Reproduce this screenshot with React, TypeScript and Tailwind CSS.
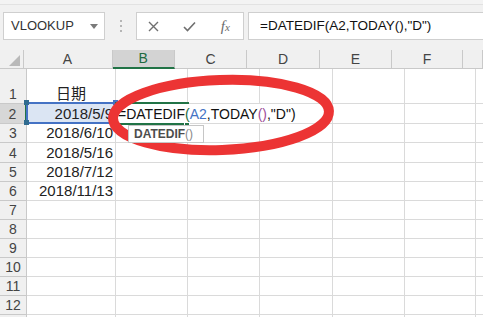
import React from "react";

type Col = { key: string; w: string; label: string };
const cols: Col[] = [
  { key: "A", w: "w-[89px]", label: "A" },
  { key: "B", w: "w-[72px]", label: "B" },
  { key: "C", w: "w-[72px]", label: "C" },
  { key: "D", w: "w-[73px]", label: "D" },
  { key: "E", w: "w-[72px]", label: "E" },
  { key: "F", w: "w-[71px]", label: "F" },
  { key: "G", w: "w-[20px]", label: "" },
];

type Row = { n: number; h: string; a?: string; center?: boolean; hideNum?: boolean };
const rows: Row[] = [
  { n: 1, h: "h-[35px]", a: "日期", center: true },
  { n: 2, h: "h-[20px]", a: "2018/5/9" },
  { n: 3, h: "h-[19px]", a: "2018/6/10" },
  { n: 4, h: "h-[20px]", a: "2018/5/16" },
  { n: 5, h: "h-[19px]", a: "2018/7/12" },
  { n: 6, h: "h-[19px]", a: "2018/11/13" },
  { n: 7, h: "h-[19px]" },
  { n: 8, h: "h-[19px]" },
  { n: 9, h: "h-[19px]" },
  { n: 10, h: "h-[19px]" },
  { n: 11, h: "h-[19px]" },
  { n: 12, h: "h-[19px]" },
  { n: 13, h: "h-[19px]", hideNum: true },
];

export default function App() {
  return (
    <div className="relative w-[483px] h-[317px] overflow-hidden bg-white font-['Liberation_Sans','Noto_Sans_CJK_SC',sans-serif] text-[#222]">
      {/* Toolbar */}
      <div className="h-[50px] bg-[#f1f1f1] flex flex-col">
        <div className="h-[5px] border-b border-[#e2e2e2] bg-[#f3f3f3]" />
        <div className="flex items-start pt-[7px]">
          <div className="ml-[3px] w-[102px] h-[28px] bg-white border border-[#cfcfcf] flex items-center pl-[7px] pr-[6px]">
            <span className="text-[13px] text-[#333] flex-1">VLOOKUP</span>
            <svg width="8" height="5" viewBox="0 0 8 5">
              <path d="M0 0 L8 0 L4 5 Z" fill="#7a7a7a" />
            </svg>
          </div>
          <div className="w-[31px] h-[28px] flex flex-col items-center justify-center gap-[3px]">
            <div className="w-[2px] h-[2px] bg-[#b5b5b5]" />
            <div className="w-[2px] h-[2px] bg-[#b5b5b5]" />
            <div className="w-[2px] h-[2px] bg-[#b5b5b5]" />
          </div>
          <div className="w-[108px] h-[28px] bg-white border border-[#cfcfcf] flex items-center">
            <div className="w-[34px] flex justify-center">
              <svg width="11" height="11" viewBox="0 0 11 11">
                <path d="M1 1 L10 10 M10 1 L1 10" stroke="#6f6f6f" strokeWidth="1.4" />
              </svg>
            </div>
            <div className="w-[38px] flex justify-center">
              <svg width="13" height="11" viewBox="0 0 13 11">
                <path d="M1 6 L4.5 9.5 L12 1.5" stroke="#6f6f6f" strokeWidth="1.6" fill="none" />
              </svg>
            </div>
            <div className="w-[36px] flex justify-center items-baseline font-['Liberation_Serif',serif] italic text-[#6a6a6a]">
              <span className="text-[15px]">f</span>
              <span className="text-[11px]">x</span>
            </div>
          </div>
          <div className="ml-[4px] flex-1 h-[28px] bg-white border border-[#cfcfcf] border-r-0 flex items-center pl-[11px]">
            <span className="text-[13.5px] text-[#111]">=DATEDIF(A2,TODAY(),"D")</span>
          </div>
        </div>
      </div>

      {/* Column headers */}
      <div className="flex h-[19px]">
        <div className="w-[27px] bg-[#f0f0f0] border-r border-b border-[#c9c9c9] relative">
          <svg className="absolute right-[3px] bottom-[2px]" width="11" height="11" viewBox="0 0 11 11">
            <path d="M11 0 L11 11 L0 11 Z" fill="#b9b9b9" />
          </svg>
        </div>
        {cols.map((c) =>
          c.key === "B" ? (
            <div
              key={c.key}
              className={`${c.w} bg-[#d3d3d3] border-r border-[#c9c9c9] border-b-2 border-b-[#217346] flex items-center justify-center text-[14px] text-[#1f6b41]`}
            >
              {c.label}
            </div>
          ) : (
            <div
              key={c.key}
              className={`${c.w} shrink-0 bg-[#f0f0f0] border-r border-b border-[#c9c9c9] flex items-center justify-center text-[14px] text-[#444]`}
            >
              {c.label}
            </div>
          )
        )}
      </div>

      {/* Rows */}
      {rows.map((r) => (
        <div key={r.n} className={`flex ${r.h}`}>
          <div
            className={`w-[27px] shrink-0 border-b border-[#c9c9c9] flex items-end justify-center pb-[1px] text-[14px] leading-[16px] text-[#444] ${
              r.n === 2 ? "bg-[#d7d7d7] border-r-2 border-r-[#217346]" : "bg-[#f0f0f0] border-r border-r-[#c9c9c9]"
            }`}
          >
            {r.hideNum ? null : r.n}
          </div>
          {cols.map((c) => (
            <div
              key={c.key}
              className={`${c.w} shrink-0 border-r border-b border-[#dadada] flex items-end ${
                c.key === "A" && r.n === 2 ? "bg-[#dbe5f3]" : ""
              } ${c.key === "A" && r.center ? "justify-center pb-[0px]" : "justify-end pr-[2px] pb-[0px]"}`}
            >
              {c.key === "A" && r.a ? (
                <span className="text-[15px] leading-[18px] text-[#222] whitespace-nowrap">{r.a}</span>
              ) : null}
            </div>
          ))}
        </div>
      ))}

      {/* Reference highlight on A2 */}
      <div className="absolute left-[26px] top-[102px] w-[90px] h-[22px] border-2 border-[#4472c4]" />
      <div className="absolute left-[24px] top-[100px] w-[5px] h-[5px] bg-[#2f6b8f]" />
      <div className="absolute left-[24px] top-[120px] w-[5px] h-[5px] bg-[#2f6b8f]" />
      <div className="absolute left-[113px] top-[100px] w-[5px] h-[5px] bg-[#4472c4]" />

      {/* Active cell editor B2 */}
      <div className="absolute left-[116px] top-[104px] w-[188px] h-[19px] bg-white flex items-end pl-[2px]">
        <span className="text-[14px] leading-[18px] text-[#111] whitespace-nowrap">
          =DATEDIF<span className="text-[#1d6b3e]">(</span>
          <span className="text-[#4472c4]">A2</span>,TODAY<span className="text-[#a0509a]">()</span>,"D")
        </span>
      </div>
      <div className="absolute left-[115px] top-[102px] w-[74px] h-[23px] border-t-2 border-b-2 border-[#217346]" />
      <div className="absolute left-[184px] top-[122px] w-[6px] h-[6px] bg-[#217346] border border-white" />

      {/* Red annotation ellipse */}
      <svg className="absolute left-0 top-0 pointer-events-none" width="483" height="317" viewBox="0 0 483 317">
        <ellipse
          cx="221"
          cy="115"
          rx="108"
          ry="35"
          fill="none"
          stroke="#ec3434"
          strokeWidth="10"
          transform="rotate(-2 221 115)"
        />
      </svg>

      {/* Tooltip */}
      <div className="absolute left-[128px] top-[125px] w-[76px] h-[18px] bg-white border border-[#c6c6c6] flex items-center pl-[5px]">
        <span className="text-[12px] font-bold text-[#4d4d4d]">DATEDIF</span>
        <span className="text-[12px] text-[#8a8a8a]">()</span>
      </div>
    </div>
  );
}
